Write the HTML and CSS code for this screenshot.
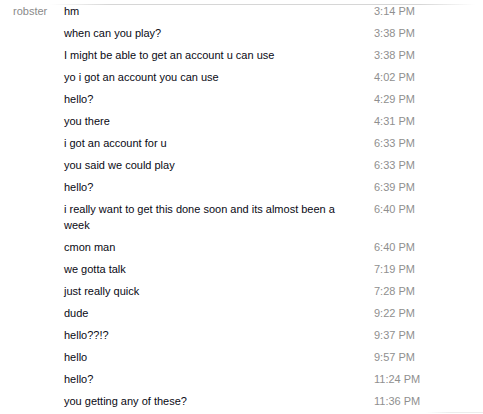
FILE: index.html
```html
<!DOCTYPE html>
<html>
<head>
<meta charset="utf-8">
<link rel="stylesheet" href="styles.css">
</head>
<body>
<div class="log">
  <div class="row"><div class="name">robster</div><div class="msg">hm</div><div class="time">3:14 PM</div></div>
  <div class="row"><div class="name"></div><div class="msg">when can you play?</div><div class="time">3:38 PM</div></div>
  <div class="row"><div class="name"></div><div class="msg">I might be able to get an account u can use</div><div class="time">3:38 PM</div></div>
  <div class="row"><div class="name"></div><div class="msg">yo i got an account you can use</div><div class="time">4:02 PM</div></div>
  <div class="row"><div class="name"></div><div class="msg">hello?</div><div class="time">4:29 PM</div></div>
  <div class="row"><div class="name"></div><div class="msg">you there</div><div class="time">4:31 PM</div></div>
  <div class="row"><div class="name"></div><div class="msg">i got an account for u</div><div class="time">6:33 PM</div></div>
  <div class="row"><div class="name"></div><div class="msg">you said we could play</div><div class="time">6:33 PM</div></div>
  <div class="row"><div class="name"></div><div class="msg">hello?</div><div class="time">6:39 PM</div></div>
  <div class="row"><div class="name"></div><div class="msg">i really want to get this done soon and its almost been a week</div><div class="time">6:40 PM</div></div>
  <div class="row"><div class="name"></div><div class="msg">cmon man</div><div class="time">6:40 PM</div></div>
  <div class="row"><div class="name"></div><div class="msg">we gotta talk</div><div class="time">7:19 PM</div></div>
  <div class="row"><div class="name"></div><div class="msg">just really quick</div><div class="time">7:28 PM</div></div>
  <div class="row"><div class="name"></div><div class="msg">dude</div><div class="time">9:22 PM</div></div>
  <div class="row"><div class="name"></div><div class="msg">hello??!?</div><div class="time">9:37 PM</div></div>
  <div class="row"><div class="name"></div><div class="msg">hello</div><div class="time">9:57 PM</div></div>
  <div class="row"><div class="name"></div><div class="msg">hello?</div><div class="time">11:24 PM</div></div>
  <div class="row"><div class="name"></div><div class="msg">you getting any of these?</div><div class="time">11:36 PM</div></div>
</div>
</body>
</html>
```

FILE: styles.css
```css
html, body {
  margin: 0;
  padding: 0;
  background: #ffffff;
}
body {
  width: 483px;
  height: 414px;
  overflow: hidden;
  position: relative;
  font-family: "Liberation Sans", Arial, sans-serif;
  font-size: 11px;
  color: #000000;
}
body::before {
  content: "";
  position: absolute;
  left: 0;
  top: 4px;
  width: 483px;
  height: 1px;
  background: linear-gradient(to right, rgba(216,216,216,0) 50px, #d6d6d6 110px, #d6d6d6 420px, rgba(216,216,216,0) 475px);
}
body::after {
  content: "";
  position: absolute;
  left: 0;
  top: 412px;
  width: 483px;
  height: 1px;
  background: linear-gradient(to right, rgba(230,230,230,0) 425px, #ececec 450px, #ececec 483px);
}
.log {
  display: flex;
  flex-direction: column;
}
.row {
  display: grid;
  grid-template-columns: 64px 310px 1fr;
  padding: 3px 0;
  line-height: 16px;
}
.name {
  padding-left: 13px;
  color: #8a8a8a;
}
.msg {
  padding-right: 20px;
  color: #0a0a14;
}
.time {
  color: #8f8f8f;
  white-space: nowrap;
}
```
